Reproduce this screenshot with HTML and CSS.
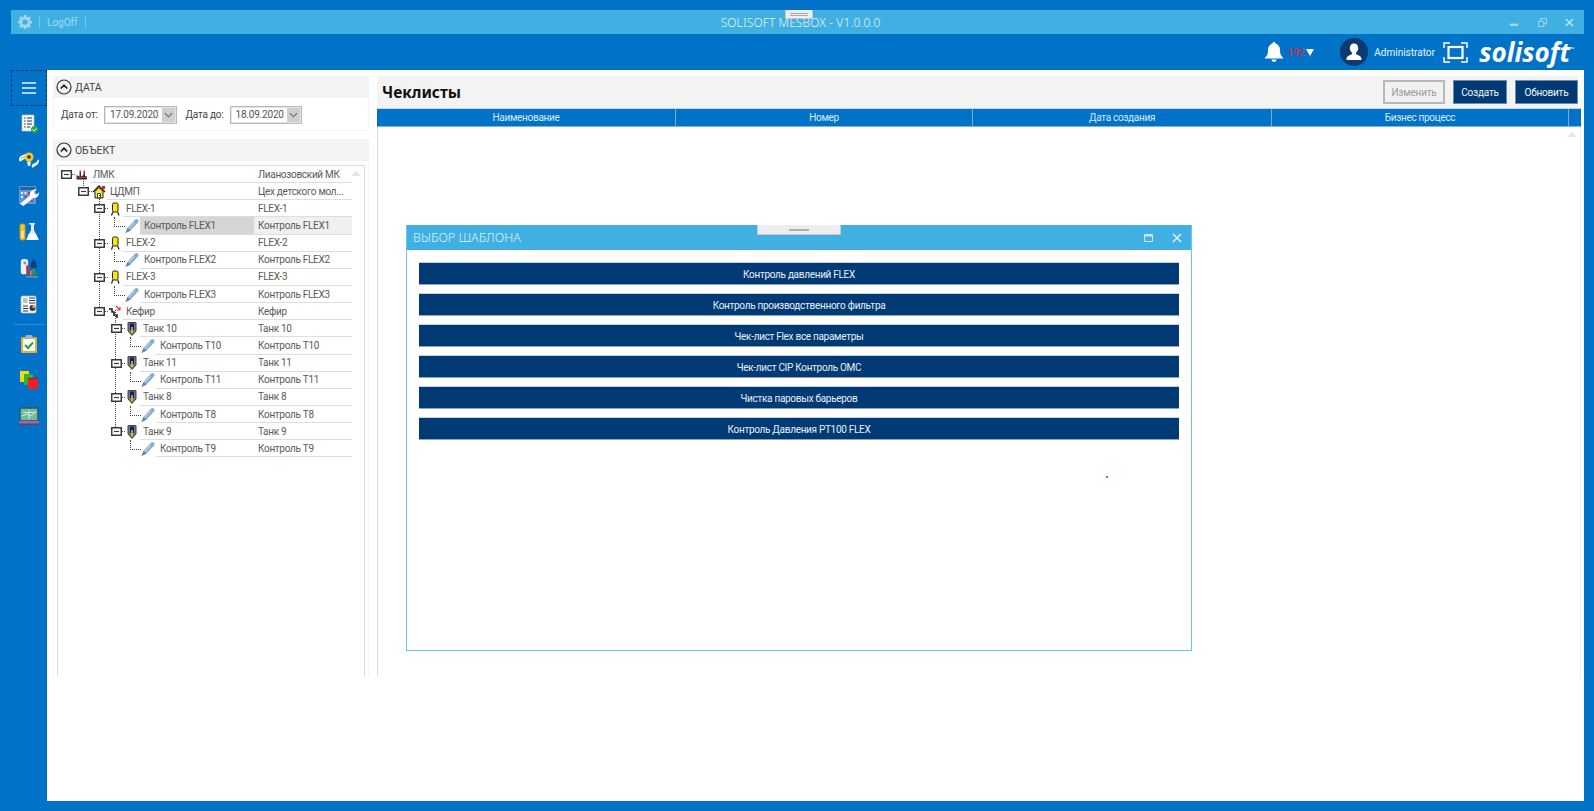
FILE: index.html
```html
<!DOCTYPE html>
<html lang="ru">
<head>
<meta charset="utf-8">
<title>SOLISOFT MESBOX</title>
<link rel="stylesheet" href="styles.css">
</head>
<body>
<svg class="defs" width="0" height="0" aria-hidden="true">
  <defs>
    <symbol id="i-box" viewBox="0 0 14 9">
      <rect x="0.75" y="0.75" width="9.5" height="7.5" fill="#fff" stroke="#3a3a3a" stroke-width="1.5"/>
      <path d="M3 4.5h5" stroke="#3a3a3a" stroke-width="1.2"/>
      <path d="M11 4.5h3" stroke="#555" stroke-dasharray="1 1"/>
    </symbol>
    <symbol id="i-factory" viewBox="0 0 14 14">
      <path d="M1.500 11.500V7l3 1.500V5h1.500v3.500L8.500 7V5H10v3l2 .5v3z" fill="#333"/>
      <path d="M4.500 5H6V2.500H4.500zM8.500 5H10V2.500H8.500z" fill="#d22"/>
      <path d="M2.500 9h9v1h-9z" fill="#d22"/>
    </symbol>
    <symbol id="i-house" viewBox="0 0 14 14">
      <path d="M1 7l6-6 6 6" fill="#f7e332" stroke="#222" stroke-width="1.400"/>
      <path d="M3 6.500V13h8V6.500L7 2.500z" fill="#f7e332" stroke="#222"/>
      <path d="M5.500 13V8.500h3V13z" fill="#fff" stroke="#222" stroke-width=".8"/>
      <path d="M10 1h3v3h-3z" fill="#d22"/>
    </symbol>
    <symbol id="i-flex" viewBox="0 0 14 14">
      <rect x="4.500" y="1" width="5.500" height="9" rx="1.500" fill="#f9e900" stroke="#222"/>
      <path d="M4.800 10L3.500 13.500M9.700 10L11 13.500" stroke="#222" stroke-width="1.200"/>
    </symbol>
    <symbol id="i-thermo" viewBox="0 0 14 14">
      <path d="M.5 14L2.500 9 10 .8a2 2 0 0 1 3 2.700L5.500 11.500z" fill="#86abcf"/>
      <path d="M1 13.500L4 9.500 9.500 3.500" stroke="#e2edf5" fill="none" stroke-width=".9"/>
      <path d="M.5 14L2.500 9 5.500 11.500z" fill="#5a82aa"/>
    </symbol>
    <symbol id="i-kefir" viewBox="0 0 14 14">
      <path d="M1 4h3v3h2v3h3v3" fill="none" stroke="#222" stroke-width="1.600"/>
      <path d="M8 1l4 4M12 2v3H9" fill="none" stroke="#e33" stroke-width="1.100"/>
      <path d="M1 3h3v2H1zM5 7h2v2H5z" fill="#444"/>
    </symbol>
    <symbol id="i-tank" viewBox="0 0 14 14">
      <path d="M3 .5h8v8.500l-4 4.500-4-4.500z" fill="#777" stroke="#444"/>
      <path d="M5 1.500h4v6.500H5z" fill="#0b1f7a"/>
      <path d="M6.300 5h1.400v6H6.300z" fill="#f2e000"/>
    </symbol>
  </defs>
</svg>

<div class="app">
  <header class="titlebar">
    <div class="tb-left">
      <svg class="gear" viewBox="0 0 16 16"><path d="M6.700 0h2.600l.4 2.200 1.300.6 1.900-1.300 1.800 1.800-1.300 1.900.6 1.300 2 .4v2.600l-2 .4-.6 1.300 1.300 1.900-1.800 1.800-1.900-1.300-1.300.6-.4 2H6.700l-.4-2-1.300-.6-1.900 1.300-1.800-1.800 1.300-1.900-.6-1.300-2-.4V6.700l2-.4.600-1.300L1.300 3.100l1.800-1.800L5 2.800l1.300-.6zM8 5a3 3 0 1 0 0 6 3 3 0 0 0 0-6z" fill="#9fd6f0" fill-rule="evenodd"/></svg>
      <span class="tb-sep"></span>
      <span class="logoff">LogOff</span>
      <span class="tb-sep"></span>
    </div>
    <div class="tb-title">SOLISOFT MESBOX - V1.0.0.0</div>
    <div class="tb-controls">
      <svg class="wc" viewBox="0 0 10 10"><path d="M0 7.500h9" stroke="#a8dcf3" stroke-width="2.500"/></svg>
      <svg class="wc" viewBox="0 0 10 10"><path d="M.5 3.500h6v6h-6zM3 3.500V.5h6.500v6H6.500" fill="none" stroke="#a8dcf3"/></svg>
      <svg class="wc" viewBox="0 0 10 10"><path d="M1 1l8 8M9 1l-8 8" stroke="#c4e7f6" stroke-width="1.500"/></svg>
    </div>
    <div class="grip grip-top"><span></span></div>
  </header>

  <div class="userbar">
    <svg class="bell" viewBox="0 0 18 20"><path d="M9 0a1.500 1.500 0 0 1 1.500 1.600C13.500 2.500 15 5 15 8c0 4 1 6 3 7.500v1H0v-1C2 14 3 12 3 8c0-3 1.500-5.500 4.500-6.400A1.500 1.500 0 0 1 9 0zM6.500 17.500h5a2.500 2.500 0 0 1-5 0z" fill="#fff"/></svg>
    <span class="count">192</span>
    <svg class="caret" viewBox="0 0 8 7"><path d="M0 0h8L4 7z" fill="#fff"/></svg>
    <svg class="avatar" viewBox="0 0 28 28"><circle cx="14" cy="14" r="14" fill="#0d3a70"/><path d="M14 5.500c2.600 0 4.200 2 4.200 4.600 0 2-1 3.700-2.200 4.700v1.400c2.500 1 5.500 1.800 5.500 4.800v1H6.500v-1c0-3 3-3.800 5.500-4.800v-1.400c-1.200-1-2.200-2.700-2.200-4.700 0-2.600 1.600-4.600 4.200-4.600z" fill="#fff"/></svg>
    <span class="admin">Administrator</span>
    <svg class="frame" viewBox="0 0 25 21"><path d="M1 6V1h6M18 1h6v5M24 15v5h-6M7 20H1v-5" fill="none" stroke="#fff" stroke-width="1.500"/><rect x="5.500" y="5" width="14" height="11" fill="none" stroke="#fff" stroke-width="2.200"/></svg>
    <span class="brand">solisoft<sup>™</sup></span>
  </div>

  <div class="main">
    <nav class="sidebar">
      <button class="menu-btn"><svg viewBox="0 0 14 12"><path d="M0 1h14M0 6h14M0 11h14" stroke="#e8f4fb" stroke-width="1.600"/></svg></button>
      <div class="nav-item"><svg viewBox="0 0 20 20"><path d="M3 1h12v16H3z" fill="#f4f6f8" stroke="#c8d4dc" stroke-width=".6"/><path d="M5 4h1.500M8 4h5M5 7h1.500M8 7h5M5 10h1.500M8 10h5M5 13h1.500M8 13h3" stroke="#1d3f63" stroke-width="1.100"/><path d="M5 7h1.500M5 13h1.500" stroke="#e8a020" stroke-width="1.100"/><circle cx="15.500" cy="15.500" r="3.500" fill="#1fae3c"/><path d="M13.500 15.500l1.500 1.500 2.500-2.500" stroke="#fff" fill="none"/></svg></div>
      <div class="nav-item"><svg viewBox="0 0 20 18"><path d="M0 9l2-3 5-2.500M.5 10l6-4" stroke="#fff" stroke-width="1.800" fill="none"/><path d="M13 14.500l5-2.500 2-3M13 16l6-4" stroke="#fff" stroke-width="1.800" fill="none"/><circle cx="10" cy="6" r="4.500" fill="#f4c52e"/><path d="M8 10.500h4l-1 4.500H9z" fill="#f0f0f0"/><circle cx="10" cy="6" r="1.800" fill="#33302a"/></svg></div>
      <div class="nav-item"><svg viewBox="0 0 20 20"><rect x="0" y="0" width="17" height="18" rx="1" fill="#5b9ad8"/><path d="M1 1h15v3H1z" fill="#2d5f9e"/><path d="M2 6h2v2H2zM5.500 6h2v2h-2zM2 10h2v2H2z" fill="#e8eef6"/><path d="M9 6h2v2H9zM5.500 10h2v2h-2zM12 14h2v2h-2z" fill="#d8283a"/><path d="M1 18l10-8.500c-.5-3 1.500-6 5-6L18 3l-3 2.800 1 2.200 2.300.3L20 6c.5 4-2.500 6.500-6 6L4.500 20z" fill="#fff"/></svg></div>
      <div class="nav-item"><svg viewBox="0 0 20 20"><rect x="1" y="2" width="5" height="16" rx="1.500" fill="#f2c230" stroke="#c99c12"/><rect x="2.500" y="9" width="2" height="7" fill="#fff3c0"/><path d="M10 1h6v1.500h-1V8l5 10H7l5-10V2.500h-2z" fill="#e4eaef"/><path d="M9.500 12h7.500l2 5.500H8z" fill="#fff"/></svg></div>
      <div class="nav-item"><svg viewBox="0 0 20 22"><rect x="1" y="1" width="8" height="17" rx="3" fill="#eef2f6"/><path d="M4 4h3v3H4z" fill="#7d99b5"/><path d="M7 8h2.500v11H7z" fill="#d91f2f"/><path d="M15 1c2 3 3.500 5 3.500 7a3.500 3.500 0 0 1-7 0c0-2 1.500-4 3.500-7z" fill="#173f75"/><path d="M11 14h2v5h-2z" fill="#ee7f1b"/><path d="M14 12h2v7h-2z" fill="#4aa42a"/><path d="M17 15h2v4h-2z" fill="#2a8a3a"/><path d="M7 20h13v1.500H7z" fill="#7f96ab"/></svg></div>
      <div class="nav-item"><svg viewBox="0 0 20 20"><rect x="2" y="2" width="15" height="17" rx="1.500" fill="#f5f7f9" stroke="#9fc5e4" stroke-width=".7"/><path d="M4 4h4.500v5H4z" fill="#b8c2cc"/><path d="M10 4h6M10 6.500h6M10 9h6M4 12h5M4 14.500h5M4 17h5" stroke="#2c3a48" stroke-width="1.100"/><circle cx="13.500" cy="14" r="3" fill="#3a3a3a"/><path d="M13.500 14v-3a3 3 0 0 1 3 3z" fill="#e8a81f"/></svg></div>
      <div class="nav-divider"></div>
      <div class="nav-item"><svg viewBox="0 0 18 20"><rect x="1" y="3" width="16" height="16" rx="1" fill="#e8a93a"/><rect x="3" y="5" width="12" height="12" fill="#fbfbf3"/><rect x="5.500" y="1" width="7" height="4" rx="1" fill="#a9b2b9"/><path d="M5 11l3 3 5-5.500" stroke="#1fa23c" stroke-width="1.900" fill="none"/></svg></div>
      <div class="nav-item"><svg viewBox="0 0 20 20"><path d="M1 1h9v11H1z" fill="#f4d90f"/><path d="M5 4h9v11H5z" fill="#2fb52c"/><path d="M9 8h10v11H9z" fill="#f01e2a"/><path d="M9 8h10v1H9z" fill="#a31620"/></svg></div>
      <div class="nav-item"><svg viewBox="0 0 20 18"><rect x="1" y="1" width="18" height="13" rx="1.500" fill="#6dbd9b" stroke="#3c4d68" stroke-width="1.400"/><path d="M3 9l5-2 4 2 5-4.500M10 3v9M4 5.500h12" stroke="#e4f6ee" stroke-width=".8" fill="none"/><path d="M0 14h20v3H0z" fill="#9a6aa3"/><path d="M0 16.500h20V18H0z" fill="#5f3f6d"/></svg></div>
    </nav>

    <main class="content">
      <section class="left">
        <div class="panel panel-date">
          <div class="panel-head">
            <svg class="collapse" viewBox="0 0 16 16"><circle cx="8" cy="8" r="7" fill="none" stroke="#333" stroke-width="1.200"/><path d="M4.800 9.500L8 6.300l3.200 3.200" fill="none" stroke="#222" stroke-width="1.700"/></svg>
            <span>ДАТА</span>
          </div>
          <div class="date-row">
            <label class="date-label">Дата от:</label>
            <div class="date-input"><span>17.09.2020</span><i class="date-btn"><svg viewBox="0 0 10 6"><path d="M1 1l4 4 4-4" fill="none" stroke="#666" stroke-width="1.200"/></svg></i></div>
            <label class="date-label lbl-to">Дата до:</label>
            <div class="date-input"><span>18.09.2020</span><i class="date-btn"><svg viewBox="0 0 10 6"><path d="M1 1l4 4 4-4" fill="none" stroke="#666" stroke-width="1.200"/></svg></i></div>
          </div>
        </div>

        <div class="panel panel-obj">
          <div class="panel-head">
            <svg class="collapse" viewBox="0 0 16 16"><circle cx="8" cy="8" r="7" fill="none" stroke="#333" stroke-width="1.200"/><path d="M4.800 9.500L8 6.300l3.200 3.200" fill="none" stroke="#222" stroke-width="1.700"/></svg>
            <span>ОБЪЕКТ</span>
          </div>
          <div class="tree">
            <svg class="tree-lines" width="308" height="300" aria-hidden="true">
              <path d="M25.500 13v9M41.500 27v13M41.500 40v104M57.500 144v120" fill="none" stroke="#444" stroke-dasharray="1 1"/>
            </svg>
            <span class="scroll-up"></span>

            <div class="row l0"><div class="cell-main"><svg class="exp"><use href="#i-box"/></svg><svg class="ico"><use href="#i-factory"/></svg><span class="name">ЛМК</span></div><div class="cell-val">Лианозовский МК</div></div>
            <div class="row l1"><div class="cell-main"><svg class="exp"><use href="#i-box"/></svg><svg class="ico"><use href="#i-house"/></svg><span class="name">ЦДМП</span></div><div class="cell-val">Цех детского мол...</div></div>

            <div class="row l2"><div class="cell-main"><svg class="exp"><use href="#i-box"/></svg><svg class="ico"><use href="#i-flex"/></svg><span class="name">FLEX-1</span></div><div class="cell-val">FLEX-1</div></div>
            <div class="row l3 selected"><div class="cell-main"><span class="conn"></span><svg class="ico"><use href="#i-thermo"/></svg><span class="name">Контроль FLEX1</span></div><div class="cell-val">Контроль FLEX1</div></div>
            <div class="row l2"><div class="cell-main"><svg class="exp"><use href="#i-box"/></svg><svg class="ico"><use href="#i-flex"/></svg><span class="name">FLEX-2</span></div><div class="cell-val">FLEX-2</div></div>
            <div class="row l3"><div class="cell-main"><span class="conn"></span><svg class="ico"><use href="#i-thermo"/></svg><span class="name">Контроль FLEX2</span></div><div class="cell-val">Контроль FLEX2</div></div>
            <div class="row l2"><div class="cell-main"><svg class="exp"><use href="#i-box"/></svg><svg class="ico"><use href="#i-flex"/></svg><span class="name">FLEX-3</span></div><div class="cell-val">FLEX-3</div></div>
            <div class="row l3"><div class="cell-main"><span class="conn"></span><svg class="ico"><use href="#i-thermo"/></svg><span class="name">Контроль FLEX3</span></div><div class="cell-val">Контроль FLEX3</div></div>

            <div class="row l2"><div class="cell-main"><svg class="exp"><use href="#i-box"/></svg><svg class="ico"><use href="#i-kefir"/></svg><span class="name">Кефир</span></div><div class="cell-val">Кефир</div></div>
            <div class="row l3"><div class="cell-main"><svg class="exp"><use href="#i-box"/></svg><svg class="ico"><use href="#i-tank"/></svg><span class="name">Танк 10</span></div><div class="cell-val">Танк 10</div></div>
            <div class="row l4"><div class="cell-main"><span class="conn"></span><svg class="ico"><use href="#i-thermo"/></svg><span class="name">Контроль T10</span></div><div class="cell-val">Контроль T10</div></div>
            <div class="row l3"><div class="cell-main"><svg class="exp"><use href="#i-box"/></svg><svg class="ico"><use href="#i-tank"/></svg><span class="name">Танк 11</span></div><div class="cell-val">Танк 11</div></div>
            <div class="row l4"><div class="cell-main"><span class="conn"></span><svg class="ico"><use href="#i-thermo"/></svg><span class="name">Контроль T11</span></div><div class="cell-val">Контроль T11</div></div>
            <div class="row l3"><div class="cell-main"><svg class="exp"><use href="#i-box"/></svg><svg class="ico"><use href="#i-tank"/></svg><span class="name">Танк 8</span></div><div class="cell-val">Танк 8</div></div>
            <div class="row l4"><div class="cell-main"><span class="conn"></span><svg class="ico"><use href="#i-thermo"/></svg><span class="name">Контроль T8</span></div><div class="cell-val">Контроль T8</div></div>
            <div class="row l3"><div class="cell-main"><svg class="exp"><use href="#i-box"/></svg><svg class="ico"><use href="#i-tank"/></svg><span class="name">Танк 9</span></div><div class="cell-val">Танк 9</div></div>
            <div class="row l4"><div class="cell-main"><span class="conn"></span><svg class="ico"><use href="#i-thermo"/></svg><span class="name">Контроль T9</span></div><div class="cell-val">Контроль T9</div></div>
          </div>
        </div>
      </section>

      <section class="right">
        <div class="toolbar">
          <h1>Чеклисты</h1>
          <div class="actions">
            <button class="btn btn-disabled">Изменить</button>
            <button class="btn btn-create">Создать</button>
            <button class="btn btn-refresh">Обновить</button>
          </div>
        </div>
        <div class="thead">
          <div class="th">Наименование</div>
          <div class="th">Номер</div>
          <div class="th">Дата создания</div>
          <div class="th">Бизнес процесс</div>
          <div class="th th-end"></div>
        </div>
        <div class="tbody"><span class="scroll-up"></span></div>
      </section>
    </main>
  </div>

  <div class="modal">
    <div class="modal-head">
      <span class="modal-title">ВЫБОР ШАБЛОНА</span>
      <div class="modal-controls">
        <svg class="mc-max" viewBox="0 0 9 8"><path d="M.5.5h8v7h-8z" fill="none" stroke="#cfeaf7"/><path d="M.5 1.500h8" stroke="#cfeaf7" stroke-width="2"/></svg>
        <svg class="mc-close" viewBox="0 0 10 10"><path d="M1 1l8 8M9 1l-8 8" stroke="#dff2fb" stroke-width="1.500"/></svg>
      </div>
      <div class="grip grip-modal"><span></span></div>
    </div>
    <div class="modal-body">
      <button class="tpl">Контроль давлений FLEX</button>
      <button class="tpl">Контроль производственного фильтра</button>
      <button class="tpl">Чек-лист Flex все параметры</button>
      <button class="tpl">Чек-лист CIP Контроль ОМС</button>
      <button class="tpl">Чистка паровых барьеров</button>
      <button class="tpl">Контроль Давления PT100 FLEX</button>
    </div>
    <span class="red-dot"></span>
  </div>
</div>
</body>
</html>
```

FILE: styles.css
```css
* { box-sizing: border-box; }
html, body { margin: 0; padding: 0; height: 100%; }
body {
  background: #0073c8;
  font-family: Roboto, "Noto Sans", sans-serif;
  font-size: 10px;
  color: #555;
  overflow: hidden;
}
.defs { position: absolute; }
.app {
  position: relative;
  width: 1594px;
  height: 811px;
  padding: 10px 10px 10px 11px;
  display: flex;
  flex-direction: column;
}

/* title bar */
.titlebar {
  position: relative;
  height: 24px;
  flex: none;
  background: #40b0e2;
  display: grid;
  grid-template-columns: 1fr auto 1fr;
  align-items: center;
  color: #d8eff9;
}
.tb-left { display: flex; align-items: center; padding-left: 7px; }
.gear { width: 14px; height: 14px; margin-right: 7px; }
.tb-sep { width: 1px; height: 12px; background: #74c6ea; }
.logoff { padding: 0 7px; font-size: 10px; color: #a4dbf3; }
.tb-title { font-family: "Noto Sans", sans-serif; font-size: 12px; font-weight: 300; color: #e2f3fb; letter-spacing: .1px; position: relative; left: 3px; }
.tb-controls { display: flex; justify-content: flex-end; gap: 18.5px; padding-right: 10px; }
.wc { width: 9px; height: 9px; }
.grip {
  position: absolute;
  background: #eeeef2;
  border: 1px solid #c6c8cc;
  border-top: 0;
  display: flex;
  align-items: center;
  justify-content: center;
}
.grip span { display: block; background: #b0b0b4; }
.grip-top { left: 774px; top: 0; width: 28px; height: 9px; }
.grip-top span { width: 18px; height: 3px; border-top: 1px solid #a8a8ac; border-bottom: 1px solid #a8a8ac; background: transparent; }
.grip-modal { left: 350px; top: 0; width: 84px; height: 10px; }
.grip-modal span { width: 20px; height: 2px; }

/* user bar */
.userbar {
  height: 36px;
  flex: none;
  display: flex;
  align-items: center;
  justify-content: flex-end;
  padding-right: 10px;
  color: #fff;
}
.bell { width: 18px; height: 20px; margin-right: 4px; }
.count { color: #e6213c; font-size: 10.5px; letter-spacing: -.2px; width: 19px; }
.caret { width: 8px; height: 7px; margin-right: 26px; }
.avatar { width: 28px; height: 28px; margin-right: 6px; }
.admin { font-size: 10px; color: #e6f3fb; width: 60px; margin-right: 9px; white-space: nowrap; }
.frame { width: 25px; height: 21px; margin-right: 11px; }
.brand {
  font-family: "Open Sans", "Noto Sans", sans-serif;
  font-weight: 700;
  font-style: italic;
  font-size: 26px;
  line-height: 1;
  color: #fff;
  white-space: nowrap;
}
.brand sup { font-size: 5px; font-style: normal; vertical-align: 11px; line-height: 0; }

/* main */
.main { flex: 1; display: flex; min-height: 0; }
.sidebar { width: 36px; flex: none; display: flex; flex-direction: column; }
.menu-btn {
  height: 36px;
  width: 36px;
  padding: 0;
  background: #0073c8;
  border: 1px dashed #0d3a64;
  display: flex;
  align-items: center;
  justify-content: center;
}
.menu-btn svg { width: 14px; height: 12px; }
.nav-item { height: 36px; display: flex; align-items: center; justify-content: center; }
.nav-item svg { width: 20px; height: 20px; display: block; }
.nav-divider { height: 1px; margin: 2px 2px 1px 3px; background: #2a8ad2; }

.content {
  flex: 1;
  background: #fff;
  display: flex;
  gap: 8px;
  padding: 6px 3px 124px 6px;
  min-width: 0;
}
.left { width: 316px; flex: none; display: flex; flex-direction: column; gap: 8px; }
.panel { border: 1px solid #f5f5f5; border-top: 0; }
.panel-head {
  height: 22px;
  margin: 0 -1px;
  background: #f3f3f3;
  display: flex;
  align-items: center;
  padding-left: 3px;
  font-size: 10.5px;
  letter-spacing: -.1px;
  color: #444;
}
.collapse { width: 16px; height: 16px; margin-right: 3px; }
.panel-date { height: 55px; flex: none; }
.date-row { display: flex; align-items: center; height: 33px; padding-left: 7px; font-size: 10px; letter-spacing: -.2px; color: #444; }
.date-label { width: 43px; flex: none; white-space: nowrap; }
.lbl-to { width: 44px; margin-left: 9px; }
.date-input {
  width: 72.5px;
  height: 18px;
  border: 1px solid #b9b9b9;
  box-shadow: inset 0 0 0 1px #e4e4e4;
  display: flex;
  align-items: center;
  justify-content: space-between;
  padding: 1px 1px 1px 5px;
  font-size: 10px;
  letter-spacing: -.2px;
  color: #555;
}
.date-btn { width: 13px; height: 14px; background: #cfcfcf; display: flex; align-items: center; justify-content: center; }
.date-btn svg { width: 9px; height: 6px; }
.panel-obj { flex: 1; display: flex; flex-direction: column; min-height: 0; padding: 4px 3px 0; border-bottom: 0; }
.panel-obj .panel-head { margin: -4px -4px 4px; flex: none; }

/* tree */
.tree {
  position: relative;
  flex: 1;
  border: 1px solid #dcdcdc;
  border-bottom: 0;
}
.tree-lines { position: absolute; left: 0; top: 0; pointer-events: none; }
.row {
  display: grid;
  grid-template-columns: 196px 98px;
  height: 17.15px;
  font-size: 10px;
  letter-spacing: -.3px;
  color: #5a5a5a;
  white-space: nowrap;
}
.cell-main { display: flex; align-items: center; min-width: 0; }
.l0 .cell-main { padding-left: 3px; }
.l1 .cell-main { padding-left: 20px; }
.l2 .cell-main { padding-left: 36px; }
.l3 .cell-main { padding-left: 53px; }
.l4 .cell-main { padding-left: 69px; }
.exp { width: 14px; height: 9px; flex: none; position: relative; z-index: 1; }
.ico { width: 15px; height: 14px; flex: none; padding-right: 1px; }
.conn { width: 14px; height: 17px; flex: none; position: relative; }
.conn::after {
  content: "";
  position: absolute;
  left: 3px;
  top: 0;
  width: 10px;
  height: 9px;
  border-left: 1px dotted #444;
  border-bottom: 1px dotted #444;
}
.name, .cell-val { height: 100%; display: flex; align-items: center; border-bottom: 1px solid #dedede; }
.name { flex: 1; padding-left: 4px; min-width: 0; }
.exp ~ .name { padding-left: 3px; }
.cell-val { padding-left: 4px; }
.selected .name { background: #d6d6d6; }
.selected .cell-val { background: #f0f0f0; }
.scroll-up {
  position: absolute;
  right: 3px;
  top: 5px;
  width: 0;
  height: 0;
  border-left: 5px solid transparent;
  border-right: 5px solid transparent;
  border-bottom: 5px solid #e6e6e6;
}

/* right */
.right { flex: 1; min-width: 0; display: flex; flex-direction: column; }
.toolbar {
  height: 32px;
  flex: none;
  margin-right: 3px;
  background: #f3f3f3;
  display: flex;
  align-items: center;
  justify-content: space-between;
  padding: 0 0 0 5px;
}
.toolbar h1 { margin: 2px 0 0; font-family: "Noto Sans", sans-serif; font-size: 15.5px; line-height: 1; font-weight: 700; color: #111; }
.actions { display: flex; gap: 8px; }
.btn { height: 24px; padding: 0; font-family: inherit; font-size: 10px; letter-spacing: -.2px; border: 1px solid #6c8fb0; color: #f2f6fa; background: #003a75; }
.btn-disabled { width: 62px; background: #f1f1f1; border: 2px solid #b8b8b8; color: #9a9a9a; }
.btn-create { width: 54px; }
.btn-refresh { width: 63px; }
.thead {
  height: 19px;
  flex: none;
  display: grid;
  grid-template-columns: 299px 297px 299px 297px 12px;
  background: #0073c8;
  border-top: 1px solid #c9d6e0;
  border-bottom: 1px solid #7bb5e0;
}
.th { display: flex; align-items: center; justify-content: center; font-size: 10px; letter-spacing: -.3px; color: #d8ecf9; border-right: 1px solid #6fb0df; }
.th-end { border-right: 0; }
.tbody { position: relative; flex: 1; border-left: 1px solid #dcdcdc; border-right: 1px solid #f0f0f0; }

/* modal */
.modal {
  position: absolute;
  left: 406px;
  top: 225px;
  width: 786px;
  height: 426px;
  background: #fff;
  border: 1px solid #6cc5ee;
  border-top: 0;
}
.modal-head {
  position: relative;
  height: 25px;
  background: #40b0e2;
  display: flex;
  align-items: center;
  justify-content: space-between;
  padding: 0 9px 0 6px;
}
.modal-title { font-family: "Noto Sans", sans-serif; font-size: 12.5px; font-weight: 300; color: #dff2fb; }
.modal-controls { display: flex; align-items: center; gap: 19px; }
.mc-max { width: 9px; height: 8px; }
.mc-close { width: 10px; height: 10px; }
.modal-body { padding: 12px 12px 0; display: flex; flex-direction: column; gap: 8px; }
.tpl {
  height: 23px;
  padding: 1px 0 0;
  background: #003a75;
  border: 0;
  border-top: 1px solid #c5d2de;
  border-bottom: 1px solid #8ea6bf;
  font-family: inherit;
  font-size: 10px;
  letter-spacing: -.3px;
  color: #e8f0f7;
}
.red-dot { position: absolute; left: 699px; top: 251px; width: 2px; height: 2px; background: #e8506a; }
```
